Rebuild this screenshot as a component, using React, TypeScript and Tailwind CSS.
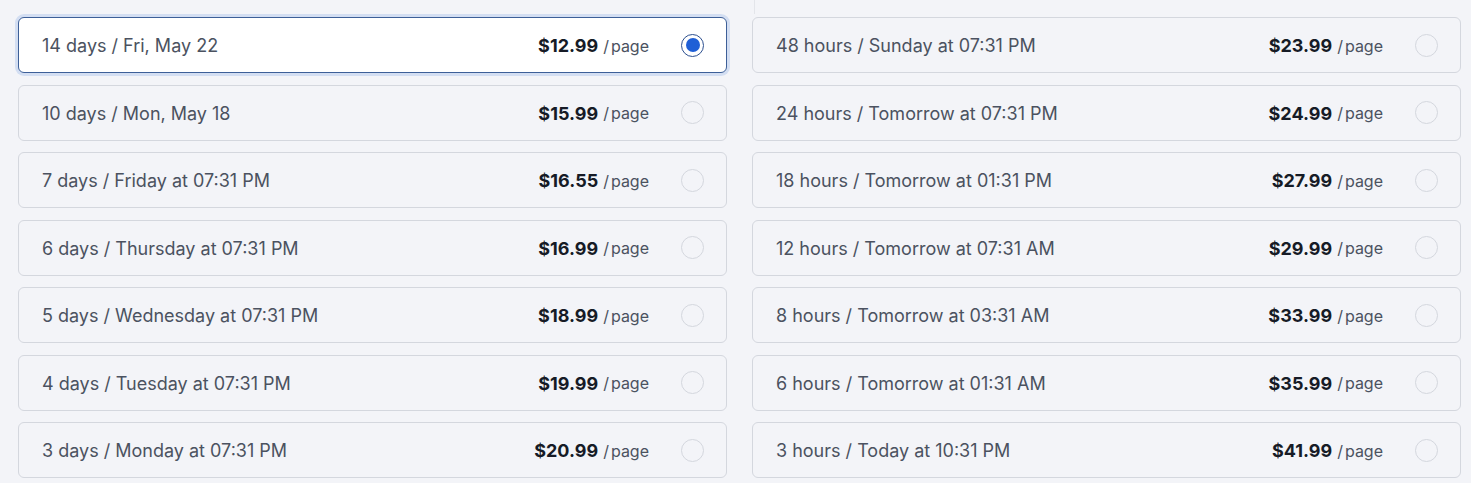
import { useState } from "react"

interface Option {
  id: string
  label: string
  price: string
}

const left: Option[] = [
  { id: "14d", label: "14 days / Fri, May 22", price: "$12.99" },
  { id: "10d", label: "10 days / Mon, May 18", price: "$15.99" },
  { id: "7d", label: "7 days / Friday at 07:31 PM", price: "$16.55" },
  { id: "6d", label: "6 days / Thursday at 07:31 PM", price: "$16.99" },
  { id: "5d", label: "5 days / Wednesday at 07:31 PM", price: "$18.99" },
  { id: "4d", label: "4 days / Tuesday at 07:31 PM", price: "$19.99" },
  { id: "3d", label: "3 days / Monday at 07:31 PM", price: "$20.99" },
]

const right: Option[] = [
  { id: "48h", label: "48 hours / Sunday at 07:31 PM", price: "$23.99" },
  { id: "24h", label: "24 hours / Tomorrow at 07:31 PM", price: "$24.99" },
  { id: "18h", label: "18 hours / Tomorrow at 01:31 PM", price: "$27.99" },
  { id: "12h", label: "12 hours / Tomorrow at 07:31 AM", price: "$29.99" },
  { id: "8h", label: "8 hours / Tomorrow at 03:31 AM", price: "$33.99" },
  { id: "6h", label: "6 hours / Tomorrow at 01:31 AM", price: "$35.99" },
  { id: "3h", label: "3 hours / Today at 10:31 PM", price: "$41.99" },
]

function DeadlineCard({
  option,
  selected,
  onSelect,
}: {
  option: Option
  selected: boolean
  onSelect: () => void
}) {
  return (
    <button
      type="button"
      onClick={onSelect}
      className={
        selected
          ? "flex h-[56px] w-full items-center rounded-md border border-[#3d5f98] bg-white pl-[23px] pr-[22px] pt-[1px] text-left shadow-[0_0_0_3px_#d3def2]"
          : "flex h-[56px] w-full items-center rounded-md border border-[#d4d7de] bg-[#f3f4f8] pl-[23px] pr-[22px] pt-[1px] text-left"
      }
    >
      <span className="flex-1 text-[18px] text-[#4b5260]">{option.label}</span>
      <span className="text-[18px] font-bold text-[#161b26]">{option.price}</span>
      <span className="ml-[5px] text-[16px] text-[#4b5260]">/</span>
      <span className="ml-[2px] text-[16px] text-[#4b5260]">page</span>
      {/* Radio */}
      <span
        className={
          selected
            ? "ml-[32px] -mt-[1px] flex size-[23px] items-center justify-center rounded-full border-[1.5px] border-[#2c4f8f] bg-white"
            : "ml-[32px] -mt-[1px] size-[23px] rounded-full border border-[#d4d7de]"
        }
      >
        {selected && <span className="size-[14px] rounded-full bg-[#1f5fd6]" />}
      </span>
    </button>
  )
}

export default function App() {
  const [selected, setSelected] = useState("14d")

  return (
    <div
      className="relative min-h-[483px] bg-[#f3f4f8] pl-[18px] pr-[10px] pt-[17px]"
      style={{ fontFamily: "Inter, 'Noto Sans', sans-serif" }}
    >
      <div className="absolute left-[754px] top-0 h-[14px] w-px bg-[#e3e5ea]" />
      <div className="grid grid-cols-2 gap-x-[25px]">
        <div className="flex flex-col gap-y-[11.5px]">
          {left.map((o) => (
            <DeadlineCard
              key={o.id}
              option={o}
              selected={selected === o.id}
              onSelect={() => setSelected(o.id)}
            />
          ))}
        </div>
        <div className="flex flex-col gap-y-[11.5px]">
          {right.map((o) => (
            <DeadlineCard
              key={o.id}
              option={o}
              selected={selected === o.id}
              onSelect={() => setSelected(o.id)}
            />
          ))}
        </div>
      </div>
    </div>
  )
}
